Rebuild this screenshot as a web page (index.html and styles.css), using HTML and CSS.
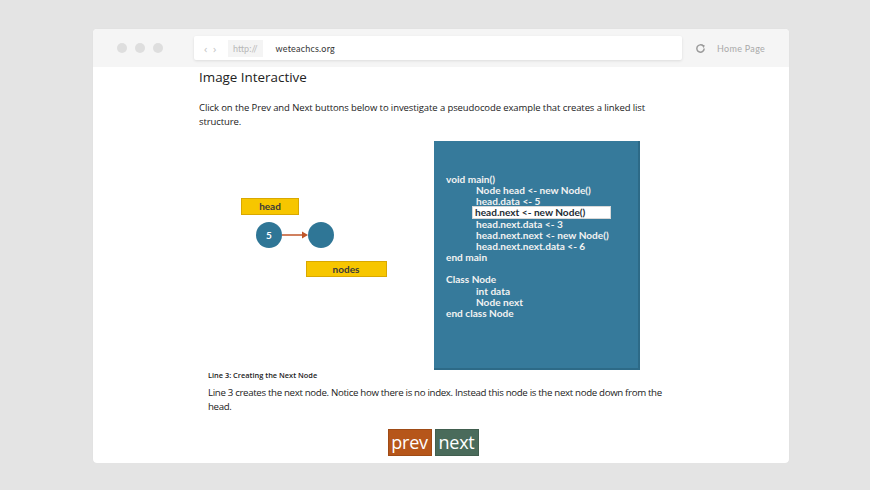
FILE: index.html
```html
<!DOCTYPE html>
<html>
<head>
<meta charset="utf-8">
<link rel="stylesheet" href="styles.css">
</head>
<body>
<div class="window">
  <div class="toolbar">
    <div class="dots"><span></span><span></span><span></span></div>
    <div class="address">
      <span class="arrows">&lsaquo;&nbsp;&nbsp;&rsaquo;</span>
      <span class="proto">http://</span>
      <span class="url">weteachcs.org</span>
    </div>
    <svg class="reload" width="11" height="11" viewBox="0 0 12 12"><path d="M10 6a4 4 0 1 1-1.2-2.85" fill="none" stroke="#9a9a9a" stroke-width="1.6"/><path d="M7.2 1.6 L10.6 2.4 L9.6 5.6 Z" fill="#9a9a9a"/></svg>
    <span class="home">Home Page</span>
  </div>
  <div class="content">
    <h1>Image Interactive</h1>
    <p class="intro">Click on the Prev and Next buttons below to investigate a pseudocode example that creates a linked list structure.</p>
    <div class="interactive">
      <svg class="diagram" width="235" height="228" viewBox="0 0 235 228">
        <rect x="42.5" y="57.5" width="57" height="16" fill="#f7c600" stroke="#d9a800"/>
        <text x="71" y="69" class="lbl" text-anchor="middle">head</text>
        <circle cx="70" cy="94" r="13" fill="#2f7696"/>
        <text x="70" y="98" class="num" text-anchor="middle">5</text>
        <line x1="83" y1="94" x2="104" y2="94" stroke="#c0562a" stroke-width="1.6"/>
        <path d="M103 90.5 L109 94 L103 97.5 Z" fill="#c0562a"/>
        <circle cx="122" cy="94" r="13" fill="#2f7696"/>
        <rect x="107.5" y="120.5" width="80" height="15" fill="#f7c600" stroke="#d9a800"/>
        <text x="147" y="131.5" class="lbl" text-anchor="middle">nodes</text>
      </svg>
      <div class="code">
        <div>void main()</div>
        <div class="in">Node head &lt;- new Node()</div>
        <div class="in">head.data &lt;- 5</div>
        <div class="in"><span class="hl">head.next &lt;- new Node()</span></div>
        <div class="in">head.next.data &lt;- 3</div>
        <div class="in">head.next.next &lt;- new Node()</div>
        <div class="in">head.next.next.data &lt;- 6</div>
        <div>end main</div>
        <div>&nbsp;</div>
        <div>Class Node</div>
        <div class="in">int data</div>
        <div class="in">Node next</div>
        <div>end class Node</div>
      </div>
    </div>
    <div class="caption">Line 3: Creating the Next Node</div>
    <p class="desc">Line 3 creates the next node. Notice how there is no index. Instead this node is the next node down from the head.</p>
    <div class="buttons">
      <span class="btn prev">prev</span>
      <span class="btn next">next</span>
    </div>
  </div>
</div>
</body>
</html>
```

FILE: styles.css
```css
html, body {
  margin: 0;
  padding: 0;
}
body {
  background: #e4e4e4;
  padding-top: 29px;
  font-family: "Open Sans", sans-serif;
}
.window {
  width: 696px;
  height: 434px;
  margin-left: 93px;
  background: #fff;
  border-radius: 4px;
  overflow: hidden;
  box-shadow: 0 0 1px rgba(0,0,0,0.08);
}
.toolbar {
  height: 38px;
  background: #f5f5f5;
  display: flex;
  align-items: center;
}
.dots {
  display: flex;
  gap: 8px;
  padding-left: 24px;
  width: 77px;
}
.dots span {
  width: 10px;
  height: 10px;
  border-radius: 50%;
  background: #dedede;
}
.address {
  width: 488px;
  height: 24px;
  background: #fff;
  border-radius: 2px;
  box-shadow: 0 1px 3px rgba(0,0,0,0.10);
  display: flex;
  align-items: center;
  font-size: 9px;
}
.arrows {
  color: #c4c4c4;
  margin-left: 10px;
  font-size: 11px;
  width: 24px;
}
.proto {
  background: #f4f4f4;
  color: #b8b8b8;
  height: 17px;
  line-height: 17px;
  padding: 0 5px;
  font-family: "Lato", sans-serif;
}
.url {
  margin-left: 13px;
  color: #333;
  font-family: "Lato", sans-serif;
  letter-spacing: 0.2px;
}
.reload {
  margin-left: 13px;
}
.home {
  margin-left: 11px;
  font-size: 9px;
  color: #a9a9a9;
  font-family: "Lato", sans-serif;
  letter-spacing: 0.3px;
}
.content {
  padding-left: 106px;
  width: 468px;
}
h1 {
  margin: 0;
  font-size: 13.4px;
  font-weight: 400;
  line-height: 20px;
  color: #222;
}
.intro {
  margin: 14px 0 0 0;
  font-size: 9.5px;
  letter-spacing: -0.1px;
  line-height: 13.5px;
  color: #222;
}
.interactive {
  display: flex;
  margin-top: 13px;
}
.diagram {
  display: block;
  flex: none;
}
.lbl {
  font-family: "Lato", sans-serif;
  font-weight: 700;
  font-size: 10px;
  fill: #3a3a3a;
}
.num {
  font-family: "Lato", sans-serif;
  font-weight: 700;
  font-size: 10px;
  fill: #fff;
}
.code {
  width: 204px;
  height: 194px;
  background: #367a9b;
  border-right: 2px solid #2d6a87;
  border-bottom: 2px solid #2d6a87;
  padding-top: 33px;
  box-sizing: content-box;
  font-family: "Lato", sans-serif;
  font-weight: 700;
  font-size: 10.1px;
  line-height: 11.15px;
  color: #f2f2f2;
}
.code div {
  padding-left: 12px;
  white-space: nowrap;
}
.code .in {
  padding-left: 42px;
}
.hl {
  display: inline-block;
  background: #fff;
  color: #1d2b33;
  width: 135px;
  margin-left: -3px;
  padding-left: 2px;
  height: 11px;
  line-height: 11px;
  outline: 1px solid #d8d8d8;
}
.caption {
  margin: 0 0 0 9px;
  font-size: 7.4px;
  font-weight: 600;
  line-height: 10px;
  color: #222;
}
.desc {
  margin: 6px 0 0 9px;
  font-size: 9.7px;
  letter-spacing: -0.33px;
  line-height: 14px;
  color: #222;
}
.buttons {
  display: flex;
  justify-content: center;
  gap: 3px;
  margin-top: 15px;
}
.btn {
  width: 44px;
  height: 27px;
  line-height: 26px;
  text-align: center;
  color: #fff;
  font-size: 18px;
  letter-spacing: -0.3px;
  box-shadow: inset 0 0 0 1px rgba(0,0,0,0.12);
}
.prev {
  background: #b6561a;
}
.next {
  background: #4a6b5b;
}
```
